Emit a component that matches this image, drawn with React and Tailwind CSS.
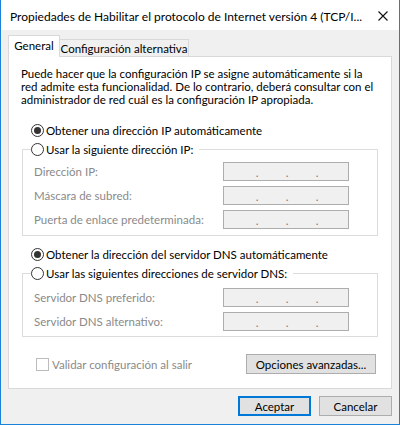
import React from "react";

function Radio({ checked, label }) {
  return (
    <div className="flex items-center h-[16px]">
      <span className="flex items-center justify-center w-[13px] h-[13px] rounded-full border border-[#333333] bg-white mr-[2px]">
        {checked && <span className="w-[7px] h-[7px] rounded-full bg-[#333333]" />}
      </span>
      <span className="text-black whitespace-nowrap">{label}</span>
    </div>
  );
}

function IpField() {
  return (
    <div className="w-[126px] h-[19px] border border-[#adadad] bg-[#f0f0f0] flex items-end pl-[31px] gap-[26px] pb-[1px]">
      <span className="w-[4px] text-center text-[#7a7a7a] leading-[12px]">.</span>
      <span className="w-[4px] text-center text-[#7a7a7a] leading-[12px]">.</span>
      <span className="w-[4px] text-center text-[#7a7a7a] leading-[12px]">.</span>
    </div>
  );
}

function FieldRow({ label }) {
  return (
    <div className="flex items-center justify-between h-[19px]">
      <span className="text-[#8a8a8a] whitespace-nowrap">{label}</span>
      <IpField />
    </div>
  );
}

export default function App() {
  return (
    <div className="w-[400px] h-[425px] flex flex-col bg-[#f0f0f0] border-x border-b border-[#1a82d9] font-['Lato',sans-serif] text-[11.5px] leading-[13px] text-black overflow-hidden">
      {/* Title bar */}
      <div className="h-[30px] bg-white flex items-center justify-between pl-[9px] pr-[11px] pt-[2px] text-[12px]">
        <span className="whitespace-nowrap">
          Propiedades de Habilitar el protocolo de Internet versión 4 (TCP/I...
        </span>
        <svg width="10" height="10" viewBox="0 0 10 10" className="shrink-0">
          <path d="M0.5 0.5 L9.5 9.5 M9.5 0.5 L0.5 9.5" stroke="#111" strokeWidth="1.1" />
        </svg>
      </div>

      {/* Tabs */}
      <div className="flex items-end mt-[4px] ml-[7px] h-[22px]">
        <div className="relative z-10 -mb-px h-[22px] w-[52px] bg-white border-x border-t border-[#d9d9d9] flex items-center justify-center pb-[2px]">
          General
        </div>
        <div className="h-[17px] w-[129px] border-t border-r border-[#d9d9d9] flex items-center justify-center whitespace-nowrap">
          Configuración alternativa
        </div>
      </div>

      {/* Panel */}
      <div className="mx-[7px] bg-white border border-[#d9d9d9] pb-[14px]">
        <p className="pt-[10px] pl-[12px] whitespace-nowrap">
          Puede hacer que la configuración IP se asigne automáticamente si la
          <br />
          red admite esta funcionalidad. De lo contrario, deberá consultar con el
          <br />
          administrador de red cuál es la configuración IP apropiada.
        </p>

        <div className="mt-[16px] ml-[22px]">
          <Radio checked label="Obtener una dirección IP automáticamente" />
        </div>
        <fieldset className="mt-[3px] mx-[13px] border border-[#dcdcdc]">
          <legend className="ml-[8px] pr-[6px]">
            <Radio label="Usar la siguiente dirección IP:" />
          </legend>
          <div className="pl-[11px] pr-[28px] pt-[5px] pb-[6px] flex flex-col gap-[5px]">
            <FieldRow label="Dirección IP:" />
            <FieldRow label="Máscara de subred:" />
            <FieldRow label="Puerta de enlace predeterminada:" />
          </div>
        </fieldset>

        <div className="mt-[10px] ml-[22px]">
          <Radio checked label="Obtener la dirección del servidor DNS automáticamente" />
        </div>
        <fieldset className="mt-[3px] mx-[13px] border border-[#dcdcdc]">
          <legend className="ml-[8px] pr-[6px]">
            <Radio label="Usar las siguientes direcciones de servidor DNS:" />
          </legend>
          <div className="pl-[11px] pr-[28px] pt-[7px] pb-[5px] flex flex-col gap-[5px]">
            <FieldRow label="Servidor DNS preferido:" />
            <FieldRow label="Servidor DNS alternativo:" />
          </div>
        </fieldset>

        <div className="mt-[17px] ml-[27px] mr-[15px] flex items-center justify-between h-[20px]">
          <div className="flex items-center">
            <span className="w-[13px] h-[13px] border border-[#bcbcbc] bg-white mr-[3px]" />
            <span className="text-[#8a8a8a] whitespace-nowrap">Validar configuración al salir</span>
          </div>
          <button className="h-[20px] w-[130px] bg-[#e1e1e1] border border-[#adadad] whitespace-nowrap">
            Opciones avanzadas...
          </button>
        </div>
      </div>

      {/* Dialog buttons */}
      <div className="mt-[7px] flex justify-end gap-[8px] pr-[7px]">
        <button className="h-[20px] w-[73px] bg-[#e1e1e1] border-2 border-[#0078d7]">Aceptar</button>
        <button className="h-[20px] w-[73px] bg-[#e1e1e1] border border-[#adadad]">Cancelar</button>
      </div>
    </div>
  );
}
